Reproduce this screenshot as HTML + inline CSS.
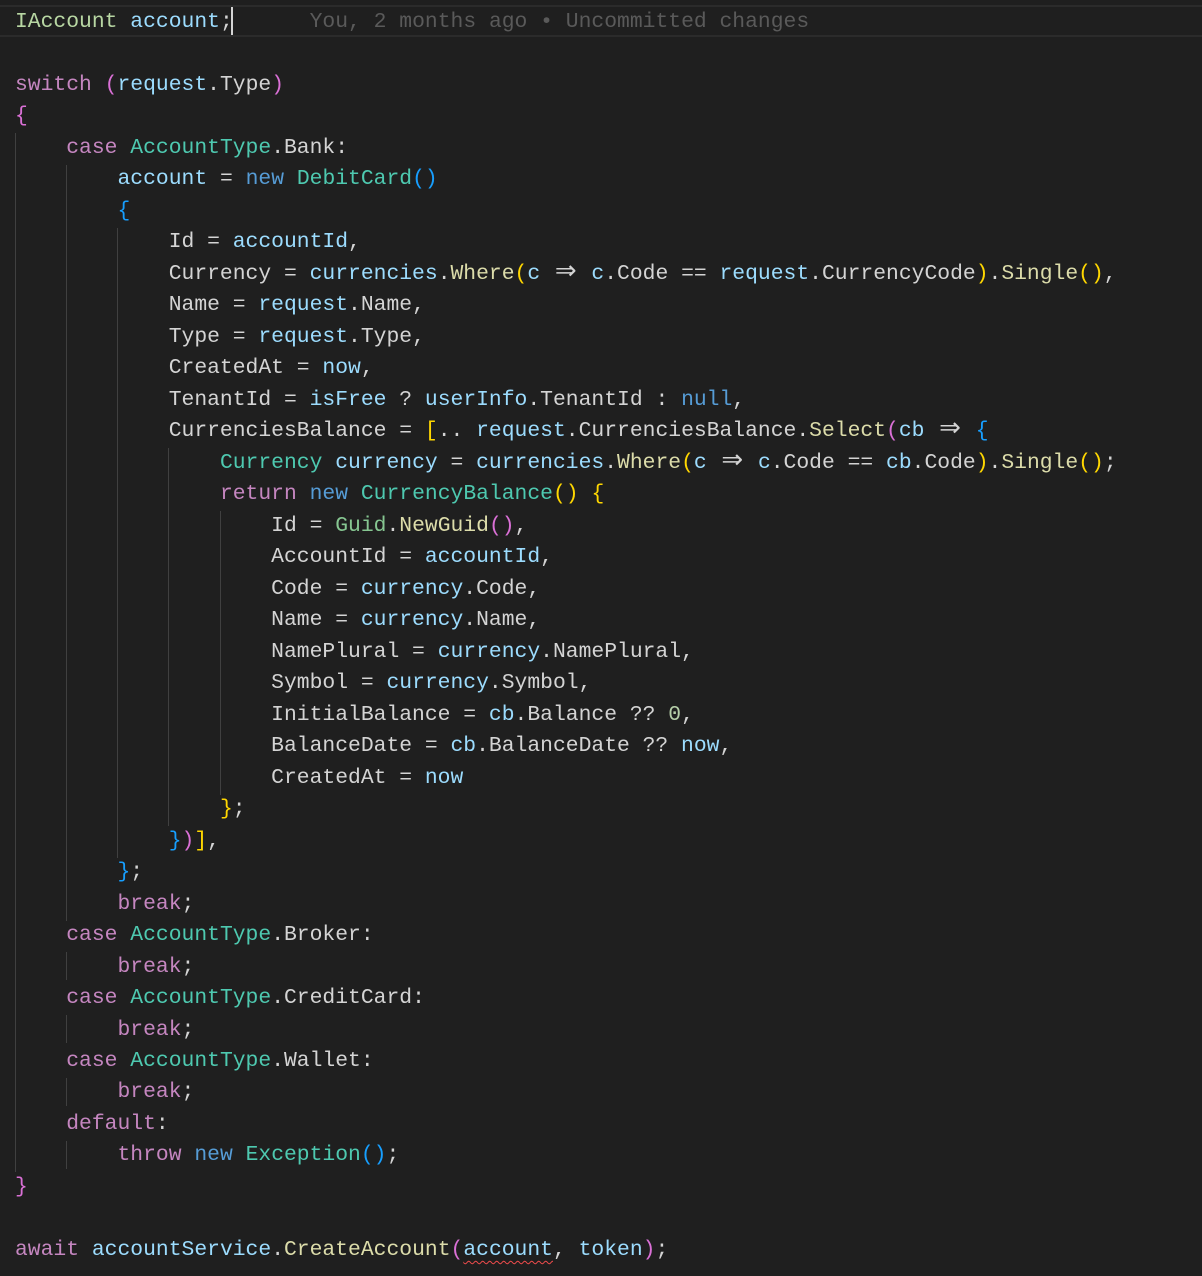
<!DOCTYPE html>
<html><head><meta charset="utf-8"><style>
html,body{margin:0;padding:0;background:#1f1f1f;width:1202px;height:1276px;overflow:hidden}
pre{position:absolute;left:15px;top:7px;margin:0;font-family:"Liberation Mono","DejaVu Sans Mono",monospace;font-size:21.35px;line-height:31.49px;color:#d4d4d4;white-space:pre}
.k{color:#c586c0}.b{color:#569cd6}.t{color:#4ec9b0}.v{color:#9cdcfe}.m{color:#dcdcaa}.n{color:#b5cea8}.s{color:#86c691}.i{color:#b8d7a3}
.y{color:#ffd700}.p{color:#da70d6}.c{color:#179fff}
.g{color:#5a5a5a}
.a{display:inline-block;width:25.62px;text-align:center;font-size:26px;line-height:20px;font-family:"DejaVu Sans",sans-serif}
.sq{text-decoration:underline wavy #f14c4c;text-underline-offset:5px;text-decoration-thickness:1px}
.gd{position:absolute;width:1px;background:#404040}
.hl{position:absolute;left:0;width:1202px;height:2px;background:#2b2b2b}
.cur{position:absolute;left:231px;top:7px;width:2px;height:28px;background:#d4d4d4}
</style></head><body>
<div class="hl" style="top:5px"></div><div class="hl" style="top:35px"></div>
<div class="cur"></div>
<div class="gd" style="left:15px;top:133px;height:1039px"></div>
<div class="gd" style="left:66px;top:165px;height:756px"></div>
<div class="gd" style="left:66px;top:952px;height:28px"></div>
<div class="gd" style="left:66px;top:1015px;height:28px"></div>
<div class="gd" style="left:66px;top:1078px;height:28px"></div>
<div class="gd" style="left:66px;top:1141px;height:28px"></div>
<div class="gd" style="left:117px;top:228px;height:630px"></div>
<div class="gd" style="left:168px;top:448px;height:378px"></div>
<div class="gd" style="left:220px;top:511px;height:284px"></div>
<pre><span class="i">IAccount</span> <span class="v">account</span>;      <span class="g">You, 2 months ago • Uncommitted changes</span>

<span class="k">switch</span> <span class="p">(</span><span class="v">request</span>.Type<span class="p">)</span>
<span class="p">{</span>
    <span class="k">case</span> <span class="t">AccountType</span>.Bank:
        <span class="v">account</span> = <span class="b">new</span> <span class="t">DebitCard</span><span class="c">()</span>
        <span class="c">{</span>
            Id = <span class="v">accountId</span>,
            Currency = <span class="v">currencies</span>.<span class="m">Where</span><span class="y">(</span><span class="v">c</span> <span class="a">⇒</span> <span class="v">c</span>.Code == <span class="v">request</span>.CurrencyCode<span class="y">)</span>.<span class="m">Single</span><span class="y">()</span>,
            Name = <span class="v">request</span>.Name,
            Type = <span class="v">request</span>.Type,
            CreatedAt = <span class="v">now</span>,
            TenantId = <span class="v">isFree</span> ? <span class="v">userInfo</span>.TenantId : <span class="b">null</span>,
            CurrenciesBalance = <span class="y">[</span>.. <span class="v">request</span>.CurrenciesBalance.<span class="m">Select</span><span class="p">(</span><span class="v">cb</span> <span class="a">⇒</span> <span class="c">{</span>
                <span class="t">Currency</span> <span class="v">currency</span> = <span class="v">currencies</span>.<span class="m">Where</span><span class="y">(</span><span class="v">c</span> <span class="a">⇒</span> <span class="v">c</span>.Code == <span class="v">cb</span>.Code<span class="y">)</span>.<span class="m">Single</span><span class="y">()</span>;
                <span class="k">return</span> <span class="b">new</span> <span class="t">CurrencyBalance</span><span class="y">()</span> <span class="y">{</span>
                    Id = <span class="s">Guid</span>.<span class="m">NewGuid</span><span class="p">()</span>,
                    AccountId = <span class="v">accountId</span>,
                    Code = <span class="v">currency</span>.Code,
                    Name = <span class="v">currency</span>.Name,
                    NamePlural = <span class="v">currency</span>.NamePlural,
                    Symbol = <span class="v">currency</span>.Symbol,
                    InitialBalance = <span class="v">cb</span>.Balance ?? <span class="n">0</span>,
                    BalanceDate = <span class="v">cb</span>.BalanceDate ?? <span class="v">now</span>,
                    CreatedAt = <span class="v">now</span>
                <span class="y">}</span>;
            <span class="c">}</span><span class="p">)</span><span class="y">]</span>,
        <span class="c">}</span>;
        <span class="k">break</span>;
    <span class="k">case</span> <span class="t">AccountType</span>.Broker:
        <span class="k">break</span>;
    <span class="k">case</span> <span class="t">AccountType</span>.CreditCard:
        <span class="k">break</span>;
    <span class="k">case</span> <span class="t">AccountType</span>.Wallet:
        <span class="k">break</span>;
    <span class="k">default</span>:
        <span class="k">throw</span> <span class="b">new</span> <span class="t">Exception</span><span class="c">()</span>;
<span class="p">}</span>

<span class="k">await</span> <span class="v">accountService</span>.<span class="m">CreateAccount</span><span class="p">(</span><span class="v sq">account</span>, <span class="v">token</span><span class="p">)</span>;</pre>
</body></html>
